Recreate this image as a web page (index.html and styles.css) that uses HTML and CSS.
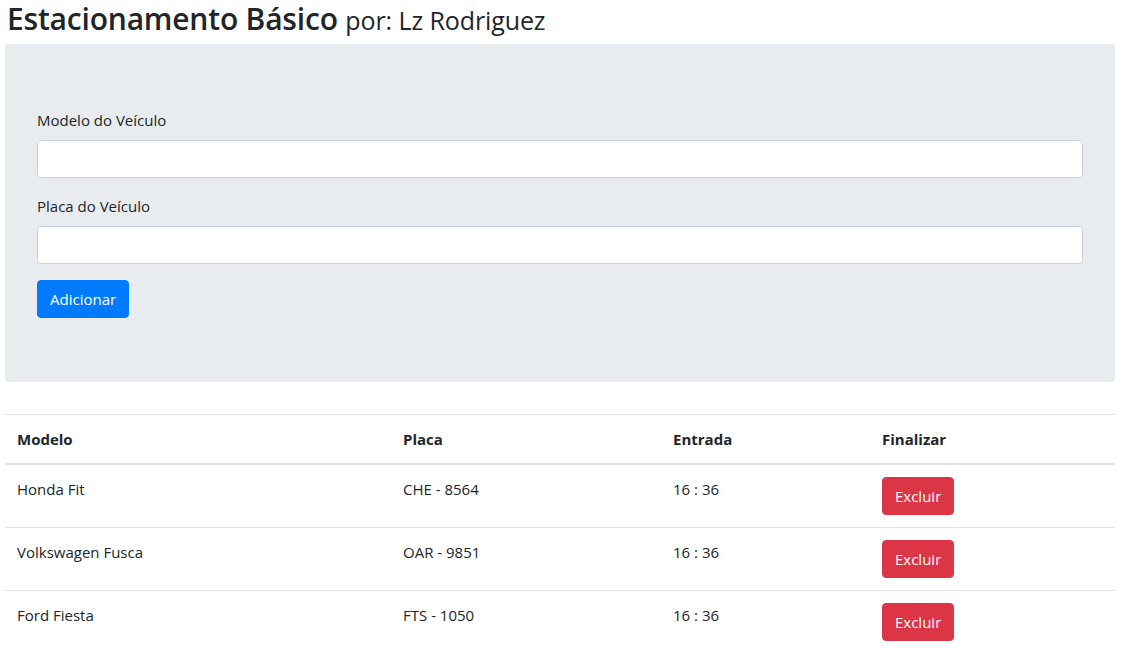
FILE: index.html
```html
<!DOCTYPE html>
<html lang="pt-BR">
<head>
<meta charset="utf-8">
<title>Estacionamento Básico</title>
<link rel="stylesheet" href="styles.css">
</head>
<body>
<div class="page">
  <h2 class="title">Estacionamento Básico <small class="author">por: Lz Rodriguez</small></h2>
  <div class="jumbotron">
    <div class="form-group">
      <label class="label" for="modelo">Modelo do Veículo</label>
      <input class="input" id="modelo" type="text">
    </div>
    <div class="form-group">
      <label class="label" for="placa">Placa do Veículo</label>
      <input class="input" id="placa" type="text">
    </div>
    <button class="btn btn-primary" type="button">Adicionar</button>
  </div>
  <table class="table">
    <colgroup>
      <col class="c1"><col class="c2"><col class="c3"><col class="c4">
    </colgroup>
    <thead>
      <tr><th>Modelo</th><th>Placa</th><th>Entrada</th><th>Finalizar</th></tr>
    </thead>
    <tbody>
      <tr><td>Honda Fit</td><td>CHE - 8564</td><td>16 : 36</td><td><button class="btn btn-danger" type="button">Excluir</button></td></tr>
      <tr><td>Volkswagen Fusca</td><td>OAR - 9851</td><td>16 : 36</td><td><button class="btn btn-danger" type="button">Excluir</button></td></tr>
      <tr><td>Ford Fiesta</td><td>FTS - 1050</td><td>16 : 36</td><td><button class="btn btn-danger" type="button">Excluir</button></td></tr>
    </tbody>
  </table>
</div>
</body>
</html>
```
FILE: styles.css
```css
* { box-sizing: border-box; }
html, body { margin: 0; padding: 0; background: #fff; }
body {
  font-family: "Open Sans", "Noto Sans", sans-serif;
  font-size: 15px;
  line-height: 24px;
  color: #212529;
}
.page { padding: 0 8px 0 5px; }
.title {
  margin: 0 0 5px 2px;
  font-size: 30px;
  font-weight: 600;
  line-height: 38px;
  letter-spacing: -0.2px;
}
.author {
  font-size: 25px;
  font-weight: 400;
  letter-spacing: -0.1px;
}
.jumbotron {
  background: #e9ecef;
  border-radius: 4px;
  padding: 64px 32px;
  margin-bottom: 32px;
}
.form-group { margin-bottom: 16px; }
.label { display: block; margin-bottom: 8px; line-height: 24px; }
.input {
  display: block;
  width: 100%;
  height: 38px;
  border: 1px solid #ced4da;
  border-radius: 4px;
  background: #fff;
  padding: 6px 12px;
  font: inherit;
}
.btn {
  display: inline-block;
  height: 38px;
  padding: 6px 12px;
  border: 1px solid transparent;
  border-radius: 4px;
  font: inherit;
  line-height: 24px;
  color: #fff;
  cursor: pointer;
}
.btn-primary { background: #007bff; border-color: #007bff; }
.btn-danger { background: #dc3545; border-color: #dc3545; }
.table {
  width: 1110px;
  border-collapse: collapse;
  table-layout: fixed;
}
.c1 { width: 386px; }
.c2 { width: 270px; }
.c3 { width: 209px; }
.c4 { width: 245px; }
.table th, .table td {
  text-align: left;
  vertical-align: top;
  padding: 12px;
  border-top: 1px solid #dee2e6;
}
.table th { font-weight: 700; }
.table thead th { border-bottom: 2px solid #dee2e6; }
```
